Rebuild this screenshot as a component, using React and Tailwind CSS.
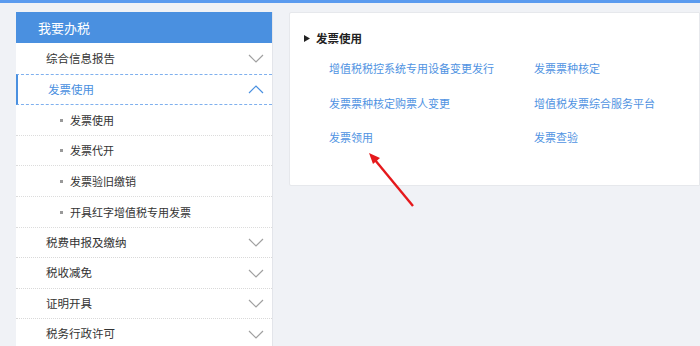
import React from "react";

const Chevron = ({ up, color = "#a0a0a0" }) => (
  <svg width="16" height="9" viewBox="0 0 16 9" className="shrink-0">
    <polyline
      points={up ? "1,8 8,1 15,8" : "1,1 8,8 15,1"}
      fill="none"
      stroke={color}
      strokeWidth="1.2"
    />
  </svg>
);

const Row = ({ label, h }) => (
  <div className={`${h} flex items-center justify-between pl-[30px] pr-[8px] border-b border-dotted border-[#d9d9d9] text-[11.5px] text-[#333]`}>
    <span>{label}</span>
    <Chevron />
  </div>
);

const SubRow = ({ label, h }) => (
  <div className={`${h} flex items-center pl-[44px] border-b border-dotted border-[#dcdcdc] text-[11px] text-[#333]`}>
    <span className="w-[3px] h-[3px] bg-[#999] mr-[7px]" />
    <span>{label}</span>
  </div>
);

export default function App() {
  const links = [
    ["增值税税控系统专用设备变更发行", "发票票种核定"],
    ["发票票种核定购票人变更", "增值税发票综合服务平台"],
    ["发票领用", "发票查验"],
  ];
  return (
    <div
      className="relative w-[700px] h-[346px] overflow-hidden bg-[#f0f2f6]"
      style={{ fontFamily: '"Noto Sans CJK SC", "Noto Sans", sans-serif' }}
    >
      <div className="h-[3px] bg-[#5b9bef]" />
      <div className="flex items-start pt-[9px] pl-[16px]">
        <div className="w-[257px] bg-white border-r border-[#e3e5ea] shrink-0">
          <div className="h-[31px] bg-[#4a90e0] flex items-center pl-[22px] text-white text-[13px]">
            我要办税
          </div>
          <div className="h-[31px] flex items-center justify-between pl-[30px] pr-[8px] text-[11.5px] text-[#333]">
            <span>综合信息报告</span>
            <Chevron />
          </div>
          <div
            className="h-[31px] flex items-center justify-between pl-[30px] pr-[8px] border-y border-dashed border-[#7fb0ee] border-l-2 border-l-[#4a90e0] text-[11.5px] text-[#4a90e0]"
            style={{ borderLeftStyle: "solid" }}
          >
            <span>发票使用</span>
            <Chevron up color="#4a90e0" />
          </div>
          <SubRow label="发票使用" h="h-[31px]" />
          <SubRow label="发票代开" h="h-[30px]" />
          <SubRow label="发票验旧缴销" h="h-[31px]" />
          <SubRow label="开具红字增值税专用发票" h="h-[31px]" />
          <Row label="税费申报及缴纳" h="h-[30px]" />
          <Row label="税收减免" h="h-[31px]" />
          <Row label="证明开具" h="h-[30px]" />
          <Row label="税务行政许可" h="h-[31px]" />
        </div>
        <div className="ml-[16px] flex-1 h-[174px] bg-white border border-[#e6e8ec] rounded-l-[2px] pt-[17px] pl-[14px]">
          <div className="flex items-center text-[11.5px] font-bold text-[#222]">
            <svg width="6" height="7" viewBox="0 0 6 7" className="mr-[6px]">
              <polygon points="0,0 6,3.5 0,7" fill="#222" />
            </svg>
            发票使用
          </div>
          <div className="mt-[12px] pl-[25px] grid grid-cols-[205px_1fr] gap-y-[16.5px] text-[11px] text-[#4f93e2]">
            {links.flat().map((t) => (
              <div key={t} className="h-[18px] flex items-center">{t}</div>
            ))}
          </div>
        </div>
      </div>
      <svg className="absolute left-0 top-0" width="700" height="346">
        <line x1="413" y1="206" x2="375" y2="160" stroke="#e5191c" strokeWidth="2.4" />
        <polygon points="369,153 380,158 373,164" fill="#e5191c" />
      </svg>
    </div>
  );
}
